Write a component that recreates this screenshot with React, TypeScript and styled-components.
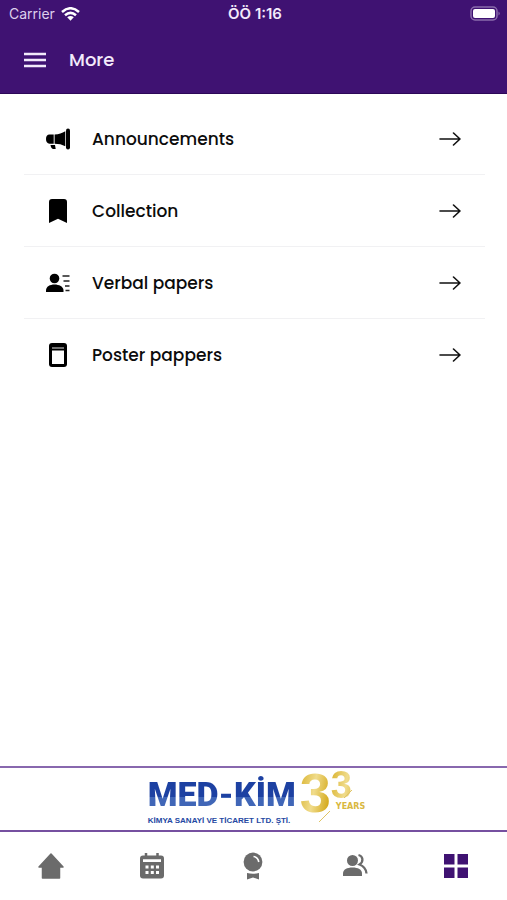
import React from 'react';
import styled, { createGlobalStyle } from 'styled-components';

const PURPLE = '#3f1272';
const GREY = '#6b6b6b';

const GlobalStyle = createGlobalStyle`
  *, *::before, *::after { box-sizing: border-box; }
  body {
    margin: 0;
    background: #fff;
    color: #0c0c0c;
    font-family: Poppins, Inter, sans-serif;
  }
`;

const Screen = styled.div`
  display: flex;
  flex-direction: column;
  min-height: 100vh;
`;

const Header = styled.header`
  background: ${PURPLE};
  color: #f3eafb;
  border-bottom: 1px solid #2c0758;
`;

const StatusBar = styled.div`
  display: grid;
  grid-template-columns: 1fr auto 1fr;
  align-items: center;
  height: 27px;
  padding: 0 6px 0 9px;
  font: 400 14px/20px Inter, sans-serif;
`;

const Carrier = styled.span`
  display: flex;
  align-items: center;
  gap: 6px;
  color: #ddcfec;
`;

const Clock = styled.span`
  font-size: 15px;
  font-weight: 600;
`;

const Battery = styled.svg`
  justify-self: end;
  display: block;
`;

const TitleBar = styled.div`
  display: flex;
  align-items: center;
  gap: 23px;
  height: 66px;
  padding: 0 24px;
`;

const MenuButton = styled.button`
  display: flex;
  padding: 0;
  border: 0;
  background: none;
  color: inherit;
  cursor: pointer;
`;

const Title = styled.h1`
  margin: 0;
  font-size: 18px;
  font-weight: 500;
  line-height: 24px;
`;

const List = styled.ul`
  flex: 1;
  margin: 0;
  padding: 9px 22px 9px 24px;
  list-style: none;
`;

const Item = styled.li`
  & + & { border-top: 1px solid #f1f1f3; }
`;

const ItemLink = styled.a`
  display: flex;
  align-items: center;
  gap: 21px;
  height: 71px;
  padding: 0 24px 0 21px;
  color: inherit;
  text-decoration: none;
`;

const ItemLabel = styled.span`
  flex: 1;
  font-size: 17px;
  font-weight: 500;
  line-height: 24px;
`;

const Sponsor = styled.section`
  display: flex;
  justify-content: center;
  height: 66px;
  padding-left: 6px;
  border-top: 2px solid #8868ae;
  border-bottom: 2px solid #7650a0;
`;

const Company = styled.div`
  display: flex;
  flex-direction: column;
  align-items: flex-start;
  padding-top: 4px;
`;

const CompanyName = styled.strong`
  font: 900 34px/44px Roboto, sans-serif;
  color: transparent;
  background: linear-gradient(#1d41a2 0 57%, #4066b7 57% 100%);
  background-clip: text;
  -webkit-background-clip: text;
`;

const CompanyDetail = styled.span`
  font: 700 8px/10px "Liberation Sans", Arial, sans-serif;
  color: #2448a2;
`;

const Anniversary = styled.div`
  position: relative;
  display: flex;
  align-items: flex-start;
  margin-left: 4px;
`;

const AnniversarySide = styled.div`
  display: flex;
  flex-direction: column;
`;

const Digit = styled.span<{ $small?: boolean }>`
  font: 700 ${(p) => (p.$small ? '38px/34px' : '56px/50px')} "Liberation Sans", Arial, sans-serif;
  color: transparent;
  background: linear-gradient(100deg, #d9b22c, #f0dc8c 45%, #d6ac22 85%);
  background-clip: text;
  -webkit-background-clip: text;
`;

const Years = styled.span`
  margin-left: 5px;
  font: 700 8px/10px "DejaVu Sans", sans-serif;
  color: #d9b840;
`;

const Flourish = styled.svg`
  position: absolute;
  left: 18px;
  top: 21px;
`;

const TabBar = styled.nav`
  display: grid;
  grid-template-columns: repeat(5, 1fr);
  height: 68px;
`;

const Tab = styled.button<{ $active?: boolean }>`
  display: flex;
  align-items: center;
  justify-content: center;
  padding: 0;
  border: 0;
  background: none;
  color: ${(p) => (p.$active ? PURPLE : GREY)};
  cursor: pointer;
`;

const Wifi = () => (
  <svg width="19" height="14" viewBox="0 0 19 14" fill="none" stroke="#fff" strokeWidth="2.500" aria-hidden="true">
    <path d="M1 5Q9.500-2.500 18 5M4 8.300Q9.500 3.500 15 8.300" />
    <path d="M6.200 10.300Q9.500 7.500 12.800 10.300L9.500 13.700z" fill="#fff" stroke="none" />
  </svg>
);

const Megaphone = () => (
  <svg width="26" height="24" viewBox="0 0 26 24" fill="#000" aria-hidden="true">
    <rect x="21" y="1.500" width="4" height="21" rx="2" />
    <path d="M9.600 7.500C14 7.500 17 6 20.300 4.300V19.200C17 17.500 14 16.700 9.600 16.700z" />
    <path d="M8.700 7.500H4.500Q1 7.700 1 12T4.500 16.700H8.700zM5.500 18H10L10.700 22H8Q6 21.500 5.500 18z" />
  </svg>
);

const Bookmark = () => (
  <svg width="26" height="26" viewBox="0 0 26 26" fill="#000" aria-hidden="true">
    <path d="M4 4Q4 1 7 1H19Q22 1 22 4V25L13 20.800 4 25z" />
  </svg>
);

const Speaker = () => (
  <svg width="26" height="20" viewBox="0 0 26 20" fill="#000" aria-hidden="true">
    <circle cx="9.500" cy="5.500" r="4.800" />
    <path d="M1 19V17.500C1 13.500 5 11.500 9.500 11.500S18.500 13.500 18.500 17.500V19z" />
    <path d="M17.500 3H24.500M18.500 8H24.500M20 13H24.500M20.500 17.500H24.500" stroke="#222" strokeWidth="1.500" />
  </svg>
);

const Poster = () => (
  <svg width="26" height="26" viewBox="0 0 26 26" aria-hidden="true">
    <rect x="4" y="1" width="18" height="24" rx="3" fill="#000" />
    <path d="M7 8.500H19V22H7z" fill="#fff" />
    <path d="M7 6H19" stroke="#999" strokeWidth="1.500" />
  </svg>
);

const Arrow = () => (
  <svg width="22" height="16" viewBox="0 0 22 16" fill="none" stroke="#111" strokeWidth="1.600" strokeLinecap="round" strokeLinejoin="round" aria-hidden="true">
    <path d="M1 8H21M14.500 2L21 8 14.500 14" />
  </svg>
);

const Home = () => (
  <svg width="28" height="28" viewBox="0 0 28 28" fill="currentColor" stroke="currentColor" strokeWidth="1.500" strokeLinejoin="round" aria-hidden="true">
    <path d="M14 2L26 15H22.500V26H5.500V15H2z" />
  </svg>
);

const Calendar = () => (
  <svg width="28" height="28" viewBox="0 0 28 28" aria-hidden="true">
    <path d="M8 1V6M19.500 1V6" stroke="currentColor" strokeWidth="2.500" />
    <rect x="2" y="3.500" width="24" height="23" rx="3" fill="currentColor" />
    <path d="M5 7.300H23V10H5zM7.500 13.500h3v3h-3zM12.800 13.500h3v3h-3zM18 13.500h3v3h-3zM7.500 19h3v3h-3zM12.800 19h3v3h-3zM18 19h3v3h-3z" fill="#fff" />
  </svg>
);

const Award = () => (
  <svg width="28" height="28" viewBox="0 0 28 28" fill="currentColor" aria-hidden="true">
    <circle cx="14" cy="10" r="9.400" />
    <path d="M14.500 4.500Q19 5 19.800 10" fill="none" stroke="#fff" strokeWidth="1.600" />
    <path d="M8 21Q14 22.500 20 21V27.500L14 25.500 8 27.500z" />
  </svg>
);

const People = () => (
  <svg width="28" height="26" viewBox="0 0 28 26" fill="currentColor" aria-hidden="true">
    <circle cx="11.500" cy="7.500" r="5.500" />
    <path d="M2 23V20.500C2 16.500 6 14.500 11.500 14.500S21 16.500 21 20.500V23z" />
    <path d="M17.500 2C22 3 23 8.500 18.500 11.500Q25 14 25.500 20.500" fill="none" stroke="currentColor" strokeWidth="2.300" />
  </svg>
);

const Grid = () => (
  <svg width="26" height="26" viewBox="0 0 26 26" fill="currentColor" aria-hidden="true">
    <path d="M1 1H11.500V11.500H1zM14.500 1H25V11.500H14.500zM1 14.500H11.500V25H1zM14.500 14.500H25V25H14.500z" />
  </svg>
);

const items = [
  { label: 'Announcements', icon: Megaphone },
  { label: 'Collection', icon: Bookmark },
  { label: 'Verbal papers', icon: Speaker },
  { label: 'Poster pappers', icon: Poster },
];

const tabs = [
  { label: 'Home', icon: Home },
  { label: 'Program', icon: Calendar },
  { label: 'Sponsors', icon: Award },
  { label: 'People', icon: People },
  { label: 'More', icon: Grid, active: true },
];

export default function App() {
  return (
    <>
      <GlobalStyle />
      <Screen>
        <Header>
          <StatusBar>
            <Carrier>Carrier <Wifi /></Carrier>
            <Clock>ÖÖ 1:16</Clock>
            <Battery width="31" height="15" viewBox="0 0 31 15" aria-hidden="true">
              <rect x="1" y="1" width="26" height="13" rx="4" fill="none" stroke="#8b6cac" strokeWidth="1.500" />
              <rect x="3" y="3" width="22" height="9" rx="2" fill="#fff" />
              <path d="M28.500 5.500Q31 7.500 28.500 9.500z" fill="#8b6cac" />
            </Battery>
          </StatusBar>
          <TitleBar>
            <MenuButton aria-label="Open menu">
              <svg width="22" height="16" viewBox="0 0 22 16" stroke="currentColor" strokeWidth="2.500" aria-hidden="true">
                <path d="M0 2H22M0 8H22M0 14H22" />
              </svg>
            </MenuButton>
            <Title>More</Title>
          </TitleBar>
        </Header>
        <List>
          {items.map(({ label, icon: Icon }) => (
            <Item key={label}>
              <ItemLink href="#">
                <Icon />
                <ItemLabel>{label}</ItemLabel>
                <Arrow />
              </ItemLink>
            </Item>
          ))}
        </List>
        <Sponsor>
          <Company>
            <CompanyName>MED-KİM</CompanyName>
            <CompanyDetail>KİMYA SANAYİ VE TİCARET LTD. ŞTİ.</CompanyDetail>
          </Company>
          <Anniversary>
            <Digit>3</Digit>
            <AnniversarySide>
              <Digit $small>3</Digit>
              <Years>YEARS</Years>
            </AnniversarySide>
            <Flourish width="36" height="34" viewBox="0 0 36 34" fill="none" stroke="#dfc466" aria-hidden="true">
              <path d="M1 33L12 22M26 9L34 1" />
            </Flourish>
          </Anniversary>
        </Sponsor>
        <TabBar aria-label="Main">
          {tabs.map(({ label, icon: Icon, active }) => (
            <Tab key={label} aria-label={label} $active={active}>
              <Icon />
            </Tab>
          ))}
        </TabBar>
      </Screen>
    </>
  );
}
